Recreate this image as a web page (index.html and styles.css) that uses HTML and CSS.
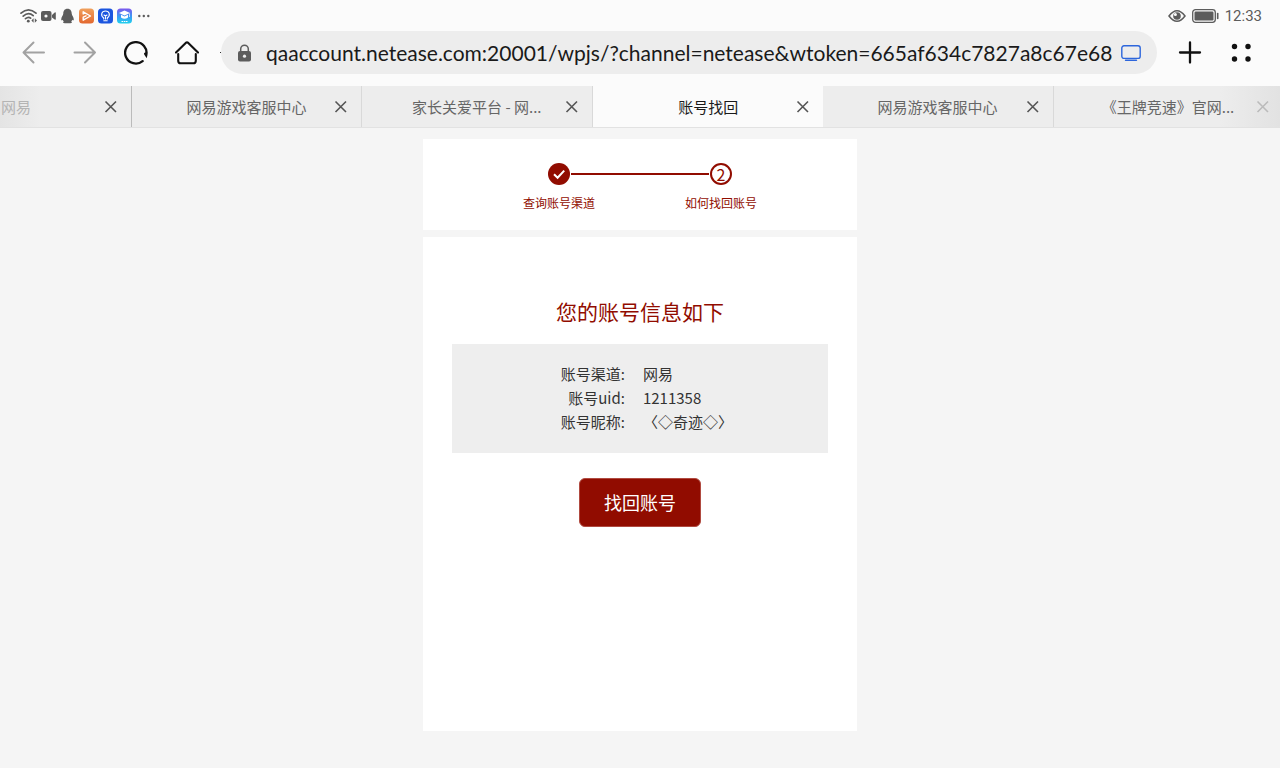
FILE: index.html
```html
<!DOCTYPE html>
<html lang="zh-CN">
<head>
    <meta charset="UTF-8">
    <meta name="viewport" content="width=device-width, initial-scale=1.0">
    <title>账号找回</title>
    <link rel="stylesheet" href="styles.css">
</head>
<body>
    <!-- 状态栏 -->
    <div class="status-bar">
        <div class="status-left">
            <svg width="17" height="16" viewBox="0 0 17 16" fill="none" stroke="#5c5c5c" stroke-width="1.7" stroke-linecap="round">
                <path d="M1 5.2Q8.5-1.6 16 5.2M3.2 8.1Q8.5 3.4 13.2 7.6M5.5 10.7Q8.5 8.2 10.6 10.2"/>
                <circle cx="8.3" cy="13.2" r="1.4" fill="#5c5c5c" stroke="none"/>
                <path d="M13.6 10.2L11.4 12.5L13.6 14.8ZM14.8 10.2L17 12.5L14.8 14.8Z" fill="#5c5c5c" stroke="none"/>
            </svg>
            <svg width="15" height="16" viewBox="0 0 15 16" fill="#5c5c5c">
                <rect x="0" y="3" width="10.5" height="10" rx="2"/>
                <path d="M11 7L14 4.2Q14.8 4 14.8 5V11Q14.8 12 14 11.8L11 9.5Z"/>
                <circle cx="5" cy="8" r="1.6" fill="#fafafa"/>
            </svg>
            <svg width="15" height="16" viewBox="0 0 15 16" fill="#5c5c5c">
                <path d="M7.5 .8C4.5.8 3.3 3 3.3 5.6C3.2 7.5 1.2 9.2 1.2 11.6C1.2 12.6 2 12.7 2.8 11.8C3 12.6 3.2 13 3.8 13.5C2.6 14.2 3 15.3 4.8 15.3H10.2C12 15.3 12.4 14.2 11.2 13.5C11.8 13 12 12.6 12.2 11.8C13 12.7 13.8 12.6 13.8 11.6C13.8 9.2 11.8 7.5 11.7 5.6C11.7 3 10.5.8 7.5.8Z"/>
            </svg>
            <svg width="15" height="16" viewBox="0 0 15 16">
                <defs>
                    <linearGradient id="orange" x2="0" y2="1"><stop stop-color="#f0a05c"/><stop offset="1" stop-color="#e3682f"/></linearGradient>
                </defs>
                <rect y=".5" width="15" height="15" rx="3.5" fill="url(#orange)"/>
                <path d="M4.2 6V3.8L11.5 8L4.2 12.2V9.2L7 7.8" fill="none" stroke="#fff" stroke-width="1.4" stroke-linejoin="round" stroke-linecap="round"/>
            </svg>
            <svg width="15" height="16" viewBox="0 0 15 16">
                <rect y=".5" width="15" height="15" rx="3.5" fill="#1b55df"/>
                <path d="M5.7 11V10C2 7.2 3.8 3 7.5 3S13 7.2 9.3 10V11M5.8 12.8H9.2M7.5 8V11M6 7L7.5 8L9 7" fill="none" stroke="#fff" stroke-width="1.1" stroke-linecap="round"/>
            </svg>
            <svg width="15" height="16" viewBox="0 0 15 16">
                <defs>
                    <linearGradient id="sky" x2="0" y2="1"><stop stop-color="#7c57ed"/><stop offset=".55" stop-color="#399cf4"/><stop offset="1" stop-color="#20d2ed"/></linearGradient>
                </defs>
                <rect y=".5" width="15" height="15" rx="3.5" fill="url(#sky)"/>
                <path d="M7.5 2.5L13 5L7.5 7.5L2 5ZM4 6.8L7.5 8.5L11 6.8V9.5Q7.5 12 4 9.5ZM12 5.5H12.7V9H12Z" fill="#fff"/>
                <path d="M4.5 13.5H6.3M7 13.5H8.4M9 13.5H10.5" stroke="#fff" stroke-width="1.2"/>
            </svg>
            <svg width="15" height="16" viewBox="0 0 15 16" fill="#5c5c5c">
                <circle cx="3.3" cy="8" r="1.2"/><circle cx="7.8" cy="8" r="1.2"/><circle cx="12.3" cy="8" r="1.2"/>
            </svg>
        </div>
        <div class="status-right">
            <svg width="18" height="14" viewBox="0 0 18 14" fill="none" stroke="#5c5c5c">
                <path d="M1 7Q9-3.5 17 7Q9 17.5 1 7Z" stroke-width="1.5"/>
                <circle cx="9" cy="7" r="3.8" fill="#5c5c5c" stroke="none"/>
                <circle cx="7.4" cy="5.4" r="1.5" fill="#fafafa" stroke="none"/>
            </svg>
            <svg width="27" height="14" viewBox="0 0 27 14" fill="none">
                <rect x=".7" y=".7" width="22.6" height="12.6" rx="2.8" stroke="#5c5c5c" stroke-width="1.3"/>
                <rect x="2.5" y="2.5" width="19" height="9" rx="1.2" fill="#5c5c5c"/>
                <path d="M25.7 4.5V9.5" stroke="#5c5c5c" stroke-width="1.6" stroke-linecap="round"/>
            </svg>
            <span class="clock">12:33</span>
        </div>
    </div>

    <!-- 地址栏 -->
    <div class="toolbar">
        <button type="button" class="icon-btn" aria-label="后退">
            <svg width="24" height="24" viewBox="0 0 24 24" fill="none" stroke="#a2a2a2" stroke-width="2" stroke-linecap="round" stroke-linejoin="round"><path d="M22 11.5H1.5M11.5 1.5L1.5 11.5L11.5 21.5"/></svg>
        </button>
        <button type="button" class="icon-btn" aria-label="前进">
            <svg width="24" height="24" viewBox="0 0 24 24" fill="none" stroke="#a2a2a2" stroke-width="2" stroke-linecap="round" stroke-linejoin="round"><path d="M1.5 11.5H22M12 1.5L22 11.5L12 21.5"/></svg>
        </button>
        <button type="button" class="icon-btn" aria-label="刷新">
            <svg width="24" height="24" viewBox="0 0 24 24" fill="none" stroke="#111" stroke-width="2.3" stroke-linecap="round"><path d="M18.6 20.1A10.7 10.7 0 1 1 22.2 14.4L21.2 12.8"/></svg>
        </button>
        <button type="button" class="icon-btn" aria-label="主页">
            <svg width="24" height="24" viewBox="0 0 24 24" fill="none" stroke="#111" stroke-width="2.1" stroke-linecap="round" stroke-linejoin="round"><path d="M1 11.5L10.7 1.9Q12 .9 13.3 1.9L23 11.5M3.2 13V19.7Q3.2 22.3 5.8 22.3H18.2Q20.8 22.3 20.8 19.7V13"/></svg>
        </button>
        <form class="address">
            <svg class="lock" width="15" height="18" viewBox="0 0 15 18">
                <path d="M3.7 8V5A3.8 3.8 0 0 1 11.3 5V8" fill="none" stroke="#5c5c5c" stroke-width="1.5"/>
                <rect x="1" y="7" width="13" height="10.5" rx="2" fill="#5c5c5c"/>
                <circle cx="7.5" cy="12.2" r="1.6" fill="#ededed"/>
            </svg>
            <input type="text" class="url" aria-label="网址" value="qaaccount.netease.com:20001/wpjs/?channel=netease&amp;wtoken=665af634c7827a8c67e68">
            <button type="button" class="icon-btn" aria-label="电脑版网页">
                <svg width="20" height="16" viewBox="0 0 20 16" fill="none" stroke="#2d66dc" stroke-width="1.4" stroke-linecap="round"><rect x=".8" y=".8" width="18.4" height="12.6" rx="2.2"/><path d="M4.5 15.3H15.5"/></svg>
            </button>
        </form>
        <button type="button" class="icon-btn" aria-label="新建标签页">
            <svg width="24" height="24" viewBox="0 0 24 24" stroke="#111" stroke-width="2.3" stroke-linecap="round"><path d="M12 1.5V21.5M2 11.5H22"/></svg>
        </button>
        <button type="button" class="icon-btn" aria-label="菜单">
            <svg width="24" height="24" viewBox="0 0 24 24" fill="#111"><circle cx="5.5" cy="5.5" r="2.7"/><circle cx="19" cy="5.5" r="2.7"/><circle cx="5.5" cy="18" r="2.7"/><circle cx="19" cy="18" r="2.7"/></svg>
        </button>
    </div>

    <!-- 标签页 -->
    <nav class="tabs">
        <div class="tab tab-first">
            <a href="#" class="tab-title">网易</a>
            <button type="button" class="icon-btn close" aria-label="关闭"><svg width="14" height="14" viewBox="0 0 14 14"><path d="M1.5 1.5L12 12M12 1.5L1.5 12"/></svg></button>
        </div>
        <div class="tab">
            <a href="#" class="tab-title">网易游戏客服中心</a>
            <button type="button" class="icon-btn close" aria-label="关闭"><svg width="14" height="14" viewBox="0 0 14 14"><path d="M1.5 1.5L12 12M12 1.5L1.5 12"/></svg></button>
        </div>
        <div class="tab">
            <a href="#" class="tab-title">家长关爱平台 - 网...</a>
            <button type="button" class="icon-btn close" aria-label="关闭"><svg width="14" height="14" viewBox="0 0 14 14"><path d="M1.5 1.5L12 12M12 1.5L1.5 12"/></svg></button>
        </div>
        <div class="tab active">
            <a href="#" class="tab-title">账号找回</a>
            <button type="button" class="icon-btn close" aria-label="关闭"><svg width="14" height="14" viewBox="0 0 14 14"><path d="M1.5 1.5L12 12M12 1.5L1.5 12"/></svg></button>
        </div>
        <div class="tab">
            <a href="#" class="tab-title">网易游戏客服中心</a>
            <button type="button" class="icon-btn close" aria-label="关闭"><svg width="14" height="14" viewBox="0 0 14 14"><path d="M1.5 1.5L12 12M12 1.5L1.5 12"/></svg></button>
        </div>
        <div class="tab tab-last">
            <a href="#" class="tab-title">《王牌竞速》官网...</a>
            <button type="button" class="icon-btn close" aria-label="关闭"><svg width="14" height="14" viewBox="0 0 14 14"><path d="M1.5 1.5L12 12M12 1.5L1.5 12"/></svg></button>
        </div>
    </nav>

    <main>
        <!-- 步骤 -->
        <section class="card steps">
            <div class="step">
                <svg width="22" height="22" viewBox="0 0 22 22"><circle cx="11" cy="11" r="11" fill="#910c00"/><path d="M6 11.2L9.6 14.8L16.2 7.6" fill="none" stroke="#fff" stroke-width="2"/></svg>
                <span>查询账号渠道</span>
            </div>
            <div class="step-line"></div>
            <div class="step">
                <span class="step-number">2</span>
                <span>如何找回账号</span>
            </div>
        </section>

        <!-- 账号信息 -->
        <section class="card account">
            <h1>您的账号信息如下</h1>
            <dl class="info">
                <dt>账号渠道:</dt>
                <dd>网易</dd>
                <dt>账号uid:</dt>
                <dd>1211358</dd>
                <dt>账号昵称:</dt>
                <dd>〈◇奇迹◇〉</dd>
            </dl>
            <button type="button" class="btn">找回账号</button>
        </section>
    </main>
</body>
</html>
```

FILE: styles.css
```css
:root {
    --primary: #910c00;
    --chrome: #fbfbfb;
    --tab: #ededed;
    --page: #f5f5f5;
    --gray: #5c5c5c;
}

* {
    margin: 0;
    padding: 0;
    box-sizing: border-box;
}

body {
    font-family: "Noto Sans CJK SC", sans-serif;
    background: var(--page);
    color: #333;
    min-height: 100vh;
    display: flex;
    flex-direction: column;
}

svg {
    display: block;
    flex: none;
}

button,
input {
    font-family: inherit;
    border: none;
    background: none;
}

/* 状态栏 */
.status-bar {
    display: flex;
    justify-content: space-between;
    align-items: center;
    height: 31px;
    padding: 0 18px 0 20px;
    background: var(--chrome);
}

.status-left,
.status-right {
    display: flex;
    align-items: center;
    gap: 4px;
}

.status-right {
    gap: 6px;
}

.clock {
    font-family: Roboto, sans-serif;
    font-size: 15px;
    line-height: 20px;
    color: var(--gray);
}

/* 地址栏 */
.toolbar {
    display: flex;
    align-items: center;
    gap: 27px;
    padding: 0 27px 12px 22px;
    background: var(--chrome);
}

.icon-btn {
    display: flex;
    flex: none;
    cursor: pointer;
}

.address {
    position: relative;
    flex: 1;
    display: flex;
    align-items: center;
    gap: 8px;
    height: 43px;
    margin: 0 -6px 0 -5px;
    padding: 0 16px;
    border-radius: 22px;
    background: var(--tab);
}

.address::before {
    content: '';
    position: absolute;
    top: 21px;
    left: -1px;
    width: 1px;
    height: 1px;
    background: #333;
}

.lock {
    margin-right: 6px;
}

.url {
    flex: 1;
    min-width: 0;
    height: 43px;
    font-family: Lato, sans-serif;
    font-size: 21px;
    color: #1a1a1a;
    outline: none;
}

/* 标签页 */
.tabs {
    display: flex;
    height: 42px;
    overflow: hidden;
    border-bottom: 1px solid #e2e2e2;
    background: var(--tab);
}

.tab {
    flex: 0 0 18%;
    display: flex;
    justify-content: flex-end;
    align-items: center;
    gap: 18px;
    padding-right: 13px;
    overflow: hidden;
    border-right: 1px solid #d9d9d9;
}

.tab-title {
    flex: none;
    width: 140px;
    font-size: 15px;
    line-height: 22px;
    text-align: center;
    white-space: nowrap;
    text-decoration: none;
    color: #666;
}

.close svg {
    stroke: #555;
    stroke-width: 1.6;
}

.tab-first {
    flex-basis: 132px;
    border-right-color: #bbb;
    background: linear-gradient(to right, #e4e4e4, var(--tab) 40px);
}

.tab-first .tab-title {
    color: #b4b4b4;
}

.tab.active {
    border-right: none;
    background: var(--chrome);
}

.active .tab-title {
    color: #1a1a1a;
}

.tab-last {
    flex: 1 0 0;
    padding-right: 10px;
    border-right: none;
    background: linear-gradient(to left, #e2e2e2, var(--tab) 60px);
}

.tab-last .close svg {
    stroke: #bbb;
}

/* 页面内容 */
main {
    flex: 1;
    display: flex;
    flex-direction: column;
    align-items: center;
    gap: 7px;
    padding: 11px 0 37px;
}

.card {
    width: 100%;
    max-width: 434px;
    background: #fff;
}

/* 步骤 */
.steps {
    display: flex;
    justify-content: center;
    padding: 24px 0 17px;
}

.step {
    display: flex;
    flex-direction: column;
    align-items: center;
    gap: 8px;
    width: 74px;
    font-size: 12px;
    line-height: 20px;
    white-space: nowrap;
    color: var(--primary);
}

.step-number {
    width: 22px;
    height: 22px;
    border: 2px solid var(--primary);
    border-radius: 50%;
    font-size: 16px;
    line-height: 18px;
    text-align: center;
}

.step-line {
    width: 138px;
    height: 2px;
    margin: 10px -25px 0;
    background: var(--primary);
}

/* 账号信息 */
.account {
    flex: 1;
    padding: 59px 29px;
    text-align: center;
}

h1 {
    font-size: 21px;
    font-weight: 400;
    line-height: 30px;
    color: var(--primary);
}

.info {
    display: grid;
    grid-template-columns: 46% 1fr;
    column-gap: 18px;
    margin: 18px 0 25px;
    padding: 18px 0 19px;
    font-size: 15px;
    line-height: 24px;
    background: #eee;
}

.info dt {
    text-align: right;
}

.info dd {
    text-align: left;
}

.btn {
    padding: 9px 24px;
    border: 1px solid #b04a40;
    border-radius: 6px;
    font-size: 18px;
    line-height: 29px;
    color: #fff;
    background: var(--primary);
    cursor: pointer;
}
```
